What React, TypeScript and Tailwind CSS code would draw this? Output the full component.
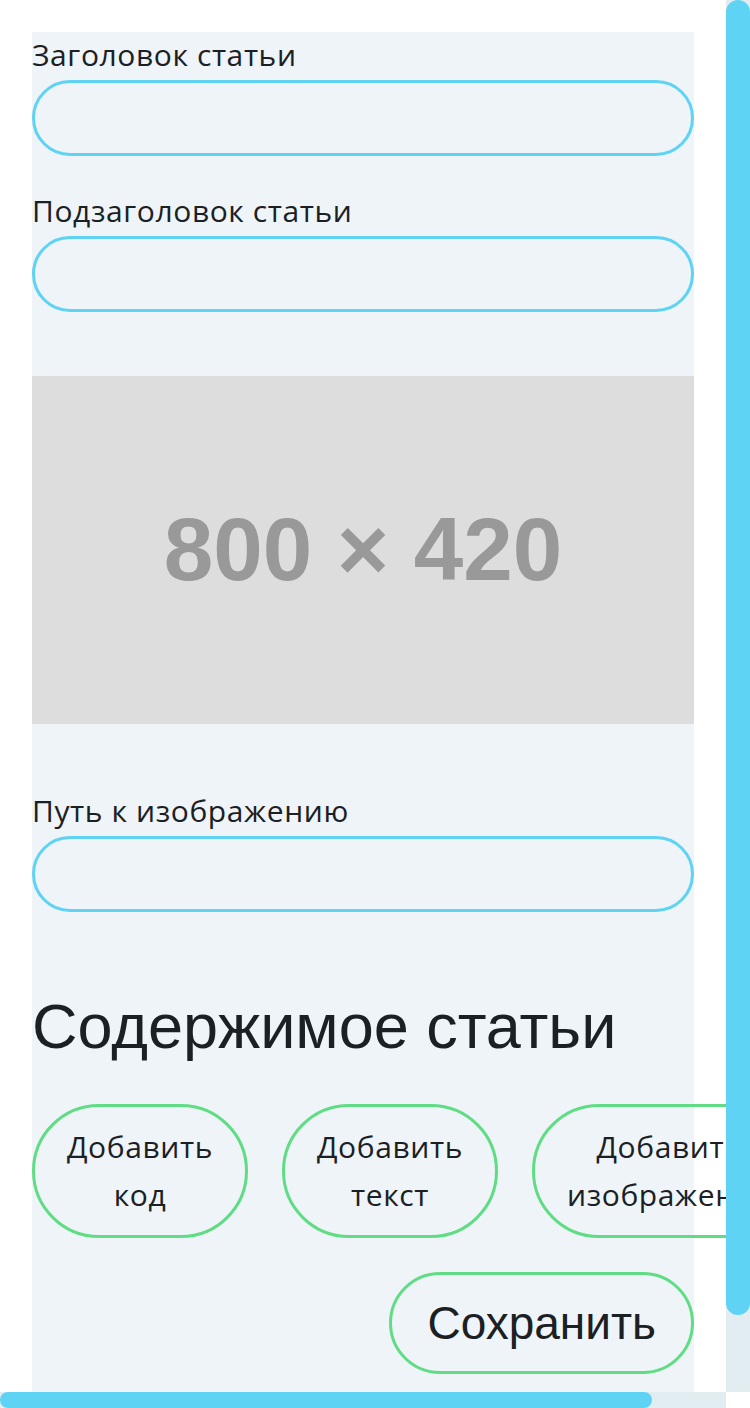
import React from "react";

const sans = { fontFamily: '"Open Sans", "Noto Sans", sans-serif' };
const arial = { fontFamily: '"Liberation Sans", Arial, sans-serif' };

function Field({ label }: { label: string }) {
  return (
    <div className="flex flex-col">
      <label className="text-[30px] leading-[46px] tracking-[0.6px] text-[#1b2024]" style={sans}>
        {label}
      </label>
      <input
        className="mt-[2px] h-[76px] w-full rounded-full border-[3px] border-[#5ed3f3] bg-transparent px-6 outline-none"
        type="text"
      />
    </div>
  );
}

function AddButton({ text }: { text: string }) {
  return (
    <button
      className="w-min shrink-0 rounded-full border-[3px] border-[#60dd84] bg-transparent px-[32px] py-[16px] text-center text-[30px] leading-[48px] tracking-[0.6px] text-[#1b2024]"
      style={sans}
    >
      {text}
    </button>
  );
}

export default function App() {
  return (
    <div className="flex h-[1408px] w-[750px] flex-col overflow-hidden bg-white">
      <div className="flex min-h-0 flex-1">
        <div className="min-w-0 flex-1 overflow-hidden pl-[32px] pt-[32px]">
          <div className="flex w-[662px] flex-col bg-[#eef4f7] pb-[40px]">
            <Field label="Заголовок статьи" />
            <div className="mt-[32px]">
              <Field label="Подзаголовок статьи" />
            </div>
            <div className="mt-[64px] flex aspect-[800/420] w-full items-center justify-center bg-[#dddddd]">
              <span className="text-[89px] font-bold text-[#999999]" style={arial}>
                800 × 420
              </span>
            </div>
            <div className="mt-[64px]">
              <Field label="Путь к изображению" />
            </div>
            <h2 className="mt-[78px] mb-[42px] text-[63px] leading-[72px] text-[#1b2024]" style={arial}>
              Содержимое статьи
            </h2>
            <div className="flex gap-[34px]">
              <AddButton text="Добавить код" />
              <AddButton text="Добавить текст" />
              <AddButton text="Добавить изображение" />
            </div>
            <button
              className="mt-[34px] self-end rounded-full border-[3px] border-[#60dd84] bg-transparent px-[35px] py-[20px] text-[46px] leading-[56px] text-[#1b2024]"
              style={arial}
            >
              Сохранить
            </button>
          </div>
        </div>
        <div className="flex w-[24px] flex-col bg-[#e2edf2]">
          <div className="h-[1315px] w-full rounded-full bg-[#5ed3f3]" />
        </div>
      </div>
      <div className="flex h-[16px]">
        <div className="flex-1 bg-[#e2edf2]">
          <div className="h-full w-[652px] rounded-full bg-[#5ed3f3]" />
        </div>
        <div className="w-[24px] bg-white" />
      </div>
    </div>
  );
}
